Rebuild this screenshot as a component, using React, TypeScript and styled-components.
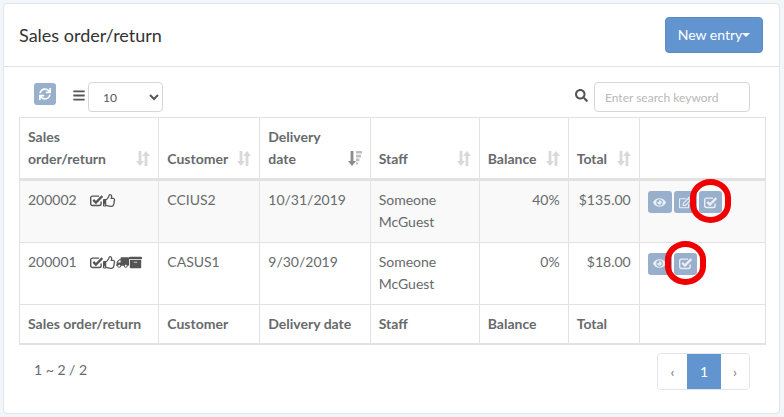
import React from "react";
import styled, { createGlobalStyle } from "styled-components";
import {
  FaArchive,
  FaBars,
  FaEye,
  FaRegEdit,
  FaRegThumbsUp,
  FaSearch,
  FaSync,
  FaTruck,
} from "react-icons/fa";

const GlobalStyle = createGlobalStyle`
  html, body {
    margin: 0;
    padding: 0;
    background: #f3f6f9;
  }
  body {
    font-family: "Lato", "Open Sans", sans-serif;
    font-size: 14px;
    color: #676a6c;
  }
  * {
    box-sizing: border-box;
  }
`;

type SortState = "none" | "desc";

interface Order {
  id: string;
  icons: ("check" | "thumb" | "truck" | "archive")[];
  customer: string;
  date: string;
  balance: string;
  total: string;
  actions: ("view" | "edit" | "approve")[];
  circled: "approve";
  striped: boolean;
}

const orders: Order[] = [
  {
    id: "200002",
    icons: ["check", "thumb"],
    customer: "CCIUS2",
    date: "10/31/2019",
    balance: "40%",
    total: "$135.00",
    actions: ["view", "edit", "approve"],
    circled: "approve",
    striped: true,
  },
  {
    id: "200001",
    icons: ["check", "thumb", "truck", "archive"],
    customer: "CASUS1",
    date: "9/30/2019",
    balance: "0%",
    total: "$18.00",
    actions: ["view", "approve"],
    circled: "approve",
    striped: false,
  },
];

const columnWidths = [139.3, 101, 110.4, 109, 89, 71, 126.3];

function SortIcon({ state = "none" }: { state?: SortState }) {
  // up and down arrows, the active one is darker
  if (state === "desc") {
    return (
      <SortSvg viewBox="0 0 14 15">
        <path fill="#8a8c8e" d="M2.6 0h2.8v10h2.6l-4 5-4-5h2.6z" />
        <path fill="#bdbfc0" d="M8 0h6v2.6H8zM8 3.8h5v2.6H8zM8 7.6h3.4v2.6H8zM8 11.4h2v2.2H8z" />
      </SortSvg>
    );
  }
  return (
    <SortSvg viewBox="0 0 14 15">
      <path fill="#d9d9d9" d="M2.6 0h2.8v10h2.6l-4 5-4-5h2.6z" />
      <path fill="#d9d9d9" d="M8.6 15h2.8V5H14l-4-5-4 5h2.6z" />
    </SortSvg>
  );
}

// heavy tick in a rounded box, react-icons only has the thin one
function CheckBoxIcon() {
  return (
    <svg width="1em" height="1em" viewBox="0.5 1 13 12" fill="none" stroke="currentColor">
      <path strokeWidth="1.4" d="M11.6 8v2.2a1.8 1.8 0 0 1-1.8 1.8H3a1.8 1.8 0 0 1-1.8-1.8V4.4A1.8 1.8 0 0 1 3 2.6h6.6" />
      <path strokeWidth="2.3" d="M3.8 6.4l2.6 2.6 6.4-6.4" />
    </svg>
  );
}

function StatusIcon({ name }: { name: Order["icons"][number] }) {
  if (name === "check") return <CheckBoxIcon />;
  if (name === "thumb") return <FaRegThumbsUp />;
  if (name === "truck") return <FaTruck style={{ transform: "scaleX(-1)" }} />;
  return <FaArchive />;
}

function ActionIcon({ name }: { name: Order["actions"][number] }) {
  if (name === "view") return <FaEye />;
  if (name === "edit") return <FaRegEdit />;
  return <CheckBoxIcon />;
}

export default function App() {
  return (
    <>
      <GlobalStyle />
      <Page>
        <Card>
          <CardHeader>
            <Title>Sales order/return</Title>
            <NewEntry>
              New entry
              <Caret />
            </NewEntry>
          </CardHeader>
          <CardBody>
            <Toolbar>
              <LeftTools>
                <RefreshButton>
                  <FaSync />
                </RefreshButton>
                <BarsIcon>
                  <FaBars />
                </BarsIcon>
                <PageSize defaultValue="10">
                  <option value="10">10</option>
                  <option value="25">25</option>
                </PageSize>
              </LeftTools>
              <RightTools>
                <SearchIcon>
                  <FaSearch />
                </SearchIcon>
                <SearchInput placeholder="Enter search keyword" />
              </RightTools>
            </Toolbar>
            <Table>
              <colgroup>
                {columnWidths.map((w, i) => (
                  <col key={i} style={{ width: w }} />
                ))}
              </colgroup>
              <thead>
                <tr>
                  <HeadCell>
                    <HeadInner>
                      <span>
                        Sales
                        <br />
                        order/return
                      </span>
                      <SortIcon />
                    </HeadInner>
                  </HeadCell>
                  <HeadCell>
                    <HeadInner>
                      <span>Customer</span>
                      <SortIcon />
                    </HeadInner>
                  </HeadCell>
                  <HeadCell>
                    <HeadInner>
                      <span>
                        Delivery
                        <br />
                        date
                      </span>
                      <SortIcon state="desc" />
                    </HeadInner>
                  </HeadCell>
                  <HeadCell>
                    <HeadInner>
                      <span>Staff</span>
                      <SortIcon />
                    </HeadInner>
                  </HeadCell>
                  <HeadCell>
                    <HeadInner>
                      <span>Balance</span>
                      <SortIcon />
                    </HeadInner>
                  </HeadCell>
                  <HeadCell>
                    <HeadInner>
                      <span>Total</span>
                      <SortIcon />
                    </HeadInner>
                  </HeadCell>
                  <HeadCell />
                </tr>
              </thead>
              <tbody>
                {orders.map((o) => (
                  <Row key={o.id} $striped={o.striped}>
                    <Cell>
                      <IdCell>
                        <span>{o.id}</span>
                        <StatusIcons>
                          {o.icons.map((name) => (
                            <StatusIcon key={name} name={name} />
                          ))}
                        </StatusIcons>
                      </IdCell>
                    </Cell>
                    <Cell>{o.customer}</Cell>
                    <Cell>{o.date}</Cell>
                    <Cell>
                      Someone
                      <br />
                      McGuest
                    </Cell>
                    <Cell $right>{o.balance}</Cell>
                    <Cell $right>{o.total}</Cell>
                    <Cell>
                      <Actions>
                        {o.actions.map((a) => (
                          <ActionButton key={a} $circled={a === o.circled}>
                            <ActionIcon name={a} />
                          </ActionButton>
                        ))}
                      </Actions>
                    </Cell>
                  </Row>
                ))}
              </tbody>
              <tfoot>
                <tr>
                  <FootCell>Sales order/return</FootCell>
                  <FootCell>Customer</FootCell>
                  <FootCell>Delivery date</FootCell>
                  <FootCell>Staff</FootCell>
                  <FootCell>Balance</FootCell>
                  <FootCell>Total</FootCell>
                  <FootCell />
                </tr>
              </tfoot>
            </Table>
            <Footer>
              <Count>1 ~ 2 / 2</Count>
              <Pager>
                <PageLink>‹</PageLink>
                <PageLink $active>1</PageLink>
                <PageLink>›</PageLink>
              </Pager>
            </Footer>
          </CardBody>
        </Card>
      </Page>
    </>
  );
}

const Page = styled.div`
  padding: 3px 4px 3px 3px;
  height: 417px;
`;

const Card = styled.div`
  width: 777px;
  height: 411px;
  background: #fff;
  border: 1px solid #dfe5ec;
  border-radius: 4px;
`;

const CardHeader = styled.div`
  height: 63px;
  padding: 13px 16px 0 15px;
  display: flex;
  justify-content: space-between;
  align-items: flex-start;
  border-bottom: 1px solid #dde4ec;
`;

const Title = styled.h3`
  margin: 8px 0 0;
  font-size: 18px;
  line-height: 20px;
  font-weight: 400;
  color: #333;
`;

const NewEntry = styled.button`
  width: 98px;
  height: 36px;
  padding: 0 0 2px;
  border: 1px solid #5a8bc5;
  border-radius: 4px;
  background: #6295d0;
  color: #fff;
  font-family: inherit;
  font-size: 14px;
  display: flex;
  align-items: center;
  justify-content: center;
`;

const Caret = styled.span`
  width: 0;
  height: 0;
  margin-top: 2px;
  border-left: 4px solid transparent;
  border-right: 4px solid transparent;
  border-top: 4px solid #fff;
`;

const CardBody = styled.div`
  padding: 15px 15px 0 15px;
`;

const Toolbar = styled.div`
  width: 746px;
  height: 35px;
  padding: 0 15px;
  display: flex;
  justify-content: space-between;
  align-items: flex-start;
`;

const LeftTools = styled.div`
  display: flex;
  align-items: flex-start;
`;

const RefreshButton = styled.div`
  width: 22px;
  height: 22px;
  margin-top: 1px;
  border-radius: 3px;
  background: #98b0cc;
  color: #fff;
  font-size: 12px;
  display: flex;
  align-items: center;
  justify-content: center;
`;

const BarsIcon = styled.div`
  margin: 6px 3px 0 17px;
  width: 12px;
  height: 14px;
  font-size: 13px;
  color: #555;
  display: flex;
  align-items: center;
`;

const PageSize = styled.select`
  width: 75px;
  height: 30px;
  padding: 0 6px 0 10px;
  border: 1px solid #d6d6d6;
  border-radius: 4px;
  background: #fff;
  font-family: inherit;
  font-size: 12px;
  color: #555;
  outline: none;
`;

const RightTools = styled.div`
  display: flex;
  align-items: flex-start;
`;

const SearchIcon = styled.div`
  margin: 7px 6px 0 0;
  font-size: 13px;
  color: #555;
  display: flex;
`;

const SearchInput = styled.input`
  width: 156px;
  height: 30px;
  padding: 1px 10px 0;
  border: 1px solid #d6d6d6;
  border-radius: 4px;
  font-family: inherit;
  font-size: 12px;
  color: #555;
  outline: none;

  &::placeholder {
    color: #b8b8b8;
    opacity: 1;
  }
`;

const Table = styled.table`
  width: 746px;
  table-layout: fixed;
  border-collapse: collapse;
  border: 1px solid #e2e2e2;
`;

const HeadCell = styled.th`
  height: 61px;
  padding: 8px 8px 8px;
  border: 1px solid #e2e2e2;
  border-bottom: 3px solid #e2e2e2;
  vertical-align: bottom;
  text-align: left;
  font-weight: 700;
  line-height: 22px;
`;

const HeadInner = styled.div`
  display: flex;
  justify-content: space-between;
  align-items: flex-end;
`;

const SortSvg = styled.svg`
  width: 14px;
  height: 15px;
  flex: none;
  margin-bottom: 4px;
`;

const Row = styled.tr<{ $striped?: boolean }>`
  background: ${(p) => (p.$striped ? "#f9f9f9" : "#fff")};
`;

const Cell = styled.td<{ $right?: boolean }>`
  padding: 8px;
  border: 1px solid #e2e2e2;
  vertical-align: top;
  line-height: 22.4px;
  text-align: ${(p) => (p.$right ? "right" : "left")};
`;

const IdCell = styled.div`
  display: flex;
  align-items: center;
`;

const StatusIcons = styled.span`
  margin-left: 13px;
  display: flex;
  align-items: center;
  font-size: 13px;
  color: #555;

  svg {
    flex: none;
  }
`;

const Actions = styled.div`
  display: flex;
  gap: 2px;
  padding-top: 2px;
`;

const ActionButton = styled.div<{ $circled?: boolean }>`
  position: relative;
  width: 23px;
  height: 22px;
  border-radius: 3px;
  background: #98b0cc;
  color: rgba(255, 255, 255, 0.8);
  font-size: 13px;
  display: flex;
  align-items: center;
  justify-content: center;

  &:first-child {
    width: 24px;
  }

  ${(p) =>
    p.$circled &&
    `
    &::after {
      content: "";
      position: absolute;
      left: -9px;
      right: -9px;
      top: -12px;
      bottom: -10px;
      border: 6px solid #f00000;
      border-radius: 50% / 42%;
    }
  `}
`;

const FootCell = styled.td`
  height: 39px;
  padding: 8px;
  border: 1px solid #e2e2e2;
  border-bottom: 2px solid #e2e2e2;
  font-weight: 700;
  line-height: 22px;
`;

const Footer = styled.div`
  margin-top: 8px;
  padding: 0 15px;
  width: 746px;
  display: flex;
  justify-content: space-between;
  align-items: flex-start;
`;

const Count = styled.div`
  margin-top: 7px;
  line-height: 20px;
`;

const Pager = styled.div`
  display: flex;
  height: 37px;
  border: 1px solid #e4e4e4;
  border-radius: 4px;
  overflow: hidden;
`;

const PageLink = styled.div<{ $active?: boolean }>`
  width: ${(p) => (p.$active ? "34px" : "29px")};
  background: ${(p) => (p.$active ? "#6295d0" : "#fff")};
  color: ${(p) => (p.$active ? "#fff" : "#777")};
  display: flex;
  align-items: center;
  justify-content: center;

  &:last-child {
    width: 28px;
  }
`;
